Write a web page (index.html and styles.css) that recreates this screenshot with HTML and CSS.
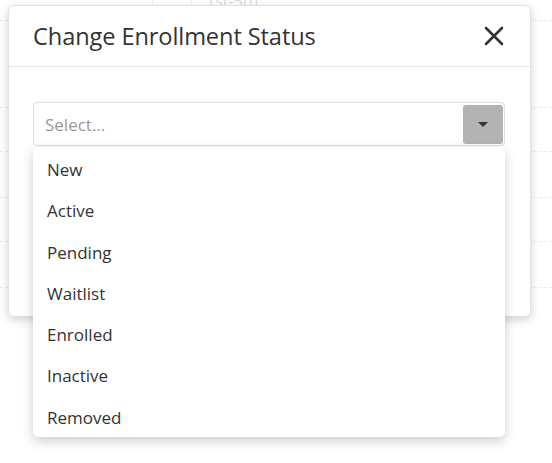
FILE: index.html
```html
<!DOCTYPE html>
<html>
<head>
<meta charset="utf-8">
<link rel="stylesheet" href="styles.css">
</head>
<body>
<div class="page">
  <div class="bg-head">
    <div class="bg-cell c1"></div>
    <div class="bg-cell c2"></div>
    <div class="bg-cell c3"><span class="bg-text">1st-5th</span></div>
  </div>
  <div class="bg-row r1"></div>
  <div class="bg-row r2"></div>
  <div class="bg-row r3"></div>
  <div class="bg-row r2"></div>
  <div class="bg-row r3"></div>
</div>

<div class="modal">
  <div class="modal-header">
    <h2 class="modal-title">Change Enrollment Status</h2>
    <button class="close" aria-label="Close">
      <svg width="20" height="20" viewBox="0 0 20 20"><path d="M2 2 L18 18 M18 2 L2 18" stroke="#333" stroke-width="2.6" stroke-linecap="round"/></svg>
    </button>
  </div>
  <div class="modal-body">
    <div class="select">
      <span class="placeholder">Select...</span>
      <span class="select-btn"><span class="caret"></span></span>
    </div>
  </div>
</div>

<ul class="menu">
  <li>New</li>
  <li>Active</li>
  <li>Pending</li>
  <li>Waitlist</li>
  <li>Enrolled</li>
  <li>Inactive</li>
  <li>Removed</li>
</ul>
</body>
</html>
```

FILE: styles.css
```css
html, body {
  margin: 0;
  padding: 0;
  background: #fff;
  font-family: "Open Sans", "Noto Sans", sans-serif;
  color: #333;
}

.page {
  width: 552px;
}

.bg-head {
  display: flex;
  height: 20px;
  border-bottom: 1px dashed #ececec;
  overflow: hidden;
}
.bg-cell {
  height: 20px;
  border-right: 1px solid #f0f0f0;
}
.c1 { width: 152px; }
.c2 { width: 38px; }
.c3 { flex: 1; border-right: none; }
.bg-text {
  display: block;
  margin-top: -9px;
  margin-left: 14px;
  font-size: 16px;
  line-height: 20px;
  color: #ddd;
}

.bg-row { border-bottom: 1px dashed #ededed; }
.r1 { height: 86px; }
.r2 { height: 43px; }
.r3 { height: 45px; }

.modal {
  position: absolute;
  left: 8px;
  top: 5px;
  width: 521px;
  height: 310px;
  background: #fff;
  border: 1px solid #e2e2e2;
  border-radius: 6px;
  box-shadow: 0 3px 10px rgba(0, 0, 0, 0.18);
}

.modal-header {
  display: flex;
  align-items: center;
  justify-content: space-between;
  height: 60px;
  padding: 0 26px 0 24px;
  border-bottom: 1px solid #e5e5e5;
}
.modal-title {
  margin: 0;
  font-size: 23.6px;
  font-weight: 400;
  letter-spacing: -0.1px;
  color: #333;
}
.close {
  border: 0;
  background: none;
  padding: 0;
  width: 20px;
  height: 20px;
  display: flex;
}

.modal-body {
  padding: 35px 25px 0 24px;
}

.select {
  display: flex;
  align-items: center;
  justify-content: space-between;
  height: 42px;
  border: 1px solid #dedede;
  border-radius: 4px;
  padding: 0 0 0 11px;
}
.placeholder {
  font-size: 17px;
  color: #999;
}
.select-btn {
  width: 40px;
  height: 39px;
  margin-right: 1px;
  background: #b3b3b3;
  border-radius: 3px;
  display: flex;
  align-items: center;
  justify-content: center;
}
.caret {
  width: 0;
  height: 0;
  border-left: 5px solid transparent;
  border-right: 5px solid transparent;
  border-top: 5px solid #333;
}

.menu {
  position: absolute;
  left: 33px;
  top: 147px;
  width: 472px;
  height: 288px;
  margin: 0;
  padding: 2px 0 0 0;
  list-style: none;
  background: #fff;
  border-radius: 5px;
  box-shadow: 0 4px 12px rgba(0, 0, 0, 0.2);
}
.menu li {
  height: 41.3px;
  line-height: 41.3px;
  padding-left: 14px;
  font-size: 17px;
  color: #333;
}
```
